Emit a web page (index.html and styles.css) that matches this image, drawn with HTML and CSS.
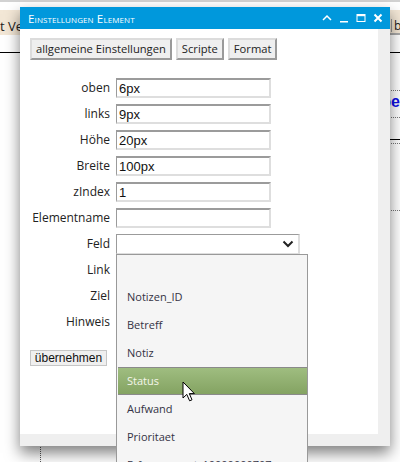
FILE: index.html
```html
<!DOCTYPE html>
<html lang="de">
<head>
<meta charset="utf-8">
<title>Einstellungen Element</title>
<link rel="stylesheet" href="styles.css">
</head>
<body>
<div class="page">
  <div class="topline"></div>
  <div class="toolbar">
    <span class="tab-left">t Ve</span>
    <span class="tab-right"><span class="tb-btn">b</span></span>
  </div>
  <div class="rule"></div>
  <div class="main">
    <div class="main-left"><div class="vline"></div></div>
    <div class="main-right">
      <div class="dots first"></div>
      <div class="blue">pe</div>
      <div class="dots"></div>
      <div class="rule-black"></div>
      <div class="dots close"></div>
      <div class="dots far"></div>
    </div>
  </div>
</div>

<div class="dialog">
  <div class="titlebar">
    <span class="title">Einstellungen Element</span>
    <span class="ctrls">
      <svg class="ic" width="10" height="10" viewBox="0 0 10 10"><path d="M1 7 L5 3 L9 7" fill="none" stroke="#fff" stroke-width="1.5"/></svg>
      <svg class="ic" width="10" height="10" viewBox="0 0 10 10"><rect x="1" y="8" width="8" height="1.5" fill="#fff"/></svg>
      <svg class="ic" width="10" height="10" viewBox="0 0 10 10"><rect x="1" y="1.5" width="8" height="7" fill="none" stroke="#fff" stroke-width="1"/><rect x="1" y="1" width="8" height="2.2" fill="#fff"/></svg>
      <svg class="ic" width="10" height="10" viewBox="0 0 10 10"><path d="M1.5 1.5 L8.5 8.5 M8.5 1.5 L1.5 8.5" stroke="#fff" stroke-width="2"/></svg>
    </span>
  </div>
  <div class="dlg-body">
    <div class="content">
      <div class="tabs">
        <button class="tab">allgemeine Einstellungen</button>
        <button class="tab">Scripte</button>
        <button class="tab">Format</button>
      </div>
      <div class="form">
        <label>oben</label><input class="field" value="6px">
        <label>links</label><input class="field" value="9px">
        <label>Höhe</label><input class="field" value="20px">
        <label>Breite</label><input class="field" value="100px">
        <label>zIndex</label><input class="field" value="1">
        <label>Elementname</label><input class="field" value="">
        <label>Feld</label>
        <div class="select"><svg width="12" height="8" viewBox="0 0 12 8"><path d="M1.5 1.5 L6 6 L10.5 1.5" fill="none" stroke="#222" stroke-width="2"/></svg></div>
        <label>Link</label><input class="field" value="">
        <label>Ziel</label><input class="field" value="">
        <label>Hinweis</label><input class="field" value="">
      </div>
      <button class="submit">übernehmen</button>
    </div>
  </div>
</div>

<div class="listbox">
  <div class="opt"></div>
  <div class="opt">Notizen_ID</div>
  <div class="opt">Betreff</div>
  <div class="opt">Notiz</div>
  <div class="opt hover">Status</div>
  <div class="opt">Aufwand</div>
  <div class="opt">Prioritaet</div>
  <div class="opt">Erfassungsort_10000000707</div>
</div>

<svg class="cursor" width="14" height="22" viewBox="0 0 14 22">
  <path d="M1 1 L1 17 L4.8 13.4 L7.6 19.8 L10 18.8 L7.3 12.6 L12.4 12.6 Z" fill="#fff" stroke="#000" stroke-width="1" stroke-linejoin="round"/>
</svg>
</body>
</html>
```

FILE: styles.css
```css
html, body {
  margin: 0;
  padding: 0;
  background: #fff;
  font-family: "Open Sans", "Liberation Sans", sans-serif;
  color: #222;
  overflow: hidden;
}
.page {
  width: 400px;
  height: 462px;
  overflow: hidden;
}
.topline {
  height: 2px;
  background: #d2d2d2;
}
.toolbar {
  margin-top: 8px;
  height: 23px;
  display: flex;
  background: #f3e7d6;
  border-bottom: 2px solid #f3e7d6;
}
.tab-left {
  flex: 1;
  font-size: 13px;
  line-height: 13px;
  padding-top: 10px;
  color: #222;
  white-space: nowrap;
}
.tab-right {
  width: 10px;
  border-bottom: 2px solid #a9a9a9;
  margin-bottom: -2px;
  display: flex;
  align-items: flex-end;
}
.tb-btn {
  display: block;
  margin-left: 1px;
  padding-left: 2px;
  border-left: 1px solid #999;
  font-size: 12px;
  line-height: 13px;
  height: 13px;
  margin-bottom: 1px;
}
.rule {
  margin-top: 17px;
  height: 1px;
  background: #000;
}
.main {
  display: flex;
}
.main-left {
  width: 390px;
  padding-left: 40px;
  box-sizing: border-box;
}
.vline {
  margin-top: 330px;
  height: 79px;
  border-left: 1px dotted #555;
}
.main-right {
  flex: 1;
}
.dots {
  height: 0;
  border-top: 1px dotted #777;
}
.dots.first { margin-top: 37px; }
.dots.close { margin-top: 3px; }
.dots.far { margin-top: 66px; }
.blue {
  height: 26px;
  font-family: "Liberation Sans", sans-serif;
  font-weight: bold;
  font-size: 16px;
  line-height: 22px;
  color: #1010e8;
}
.rule-black {
  margin-top: 21px;
  height: 1px;
  background: #000;
}

/* dialog */
.dialog {
  position: absolute;
  left: 20px;
  top: 7px;
  width: 370px;
  height: 439px;
  background: #efefef;
  box-shadow: 0 7px 14px rgba(0, 0, 0, 0.5);
  display: flex;
  flex-direction: column;
}
.titlebar {
  height: 22px;
  background: #0098dc;
  display: flex;
  align-items: center;
  padding: 0 7px 0 8px;
}
.title {
  flex: 1;
  color: #fff;
  font-size: 11.6px;
  font-variant: small-caps;
  letter-spacing: 0.1px;
}
.ctrls {
  display: flex;
  gap: 7px;
  align-items: center;
}
.ic {
  display: block;
}
.dlg-body {
  flex: 1;
  padding: 0 12px 12px 0;
  display: flex;
}
.content {
  flex: 1;
  background: #fff;
  padding: 9px 10px 0 10px;
}
.tabs {
  display: flex;
  gap: 4px;
}
.tab {
  font-family: "Open Sans", sans-serif;
  font-size: 11.2px;
  color: #222;
  height: 22px;
  padding: 0 4px;
  background: #efefef;
  border: 2px solid;
  border-color: #dcdcdc #9a9a9a #9a9a9a #dcdcdc;
  line-height: 16px;
  margin: 0;
}
.form {
  margin-top: 18px;
  display: grid;
  grid-template-columns: 80px auto;
  column-gap: 6px;
  row-gap: 6px;
  justify-content: start;
}
.form label {
  font-size: 12px;
  text-align: right;
  line-height: 20px;
  color: #222;
  white-space: nowrap;
}
.field {
  box-sizing: border-box;
  width: 155px;
  height: 20px;
  margin: 0;
  padding: 0 2px;
  font-family: "Liberation Sans", sans-serif;
  font-size: 13px;
  color: #111;
  border: 2px solid;
  border-color: #9b9b9b #dedede #dedede #9b9b9b;
  border-left-width: 1px;
  outline: none;
}
.select {
  box-sizing: border-box;
  width: 184px;
  height: 20px;
  border: 1px solid;
  border-color: #9b9b9b #dedede #dedede #9b9b9b;
  border-width: 1px 2px 1px 1px;
  display: flex;
  align-items: center;
  justify-content: flex-end;
  padding-right: 4px;
  background: #fff;
}
.submit {
  margin-top: 18px;
  height: 16px;
  width: 77px;
  padding: 0;
  font-family: "Liberation Sans", sans-serif;
  font-size: 12px;
  line-height: 13px;
  color: #111;
  background: #efefef;
  border: 1px solid #c6c6c6;
}

/* dropdown list */
.listbox {
  position: absolute;
  left: 116px;
  top: 254px;
  width: 190px;
  height: 207px;
  background: #f5f5f5;
  border: 1px solid #999;
  border-bottom: none;
  overflow: hidden;
}
.opt {
  height: 28px;
  line-height: 28px;
  padding-left: 10px;
  font-size: 11px;
  color: #343344;
  white-space: nowrap;
}
.opt.hover {
  box-sizing: border-box;
  margin-left: 1px;
  padding-left: 9px;
  background: linear-gradient(#9fbd80, #84a362);
  color: #f4f6ea;
  border-top: 1px solid #8a8a8a;
  border-bottom: 1px solid #8a8a8a;
  line-height: 26px;
}
.cursor {
  position: absolute;
  left: 182px;
  top: 381px;
}
```
